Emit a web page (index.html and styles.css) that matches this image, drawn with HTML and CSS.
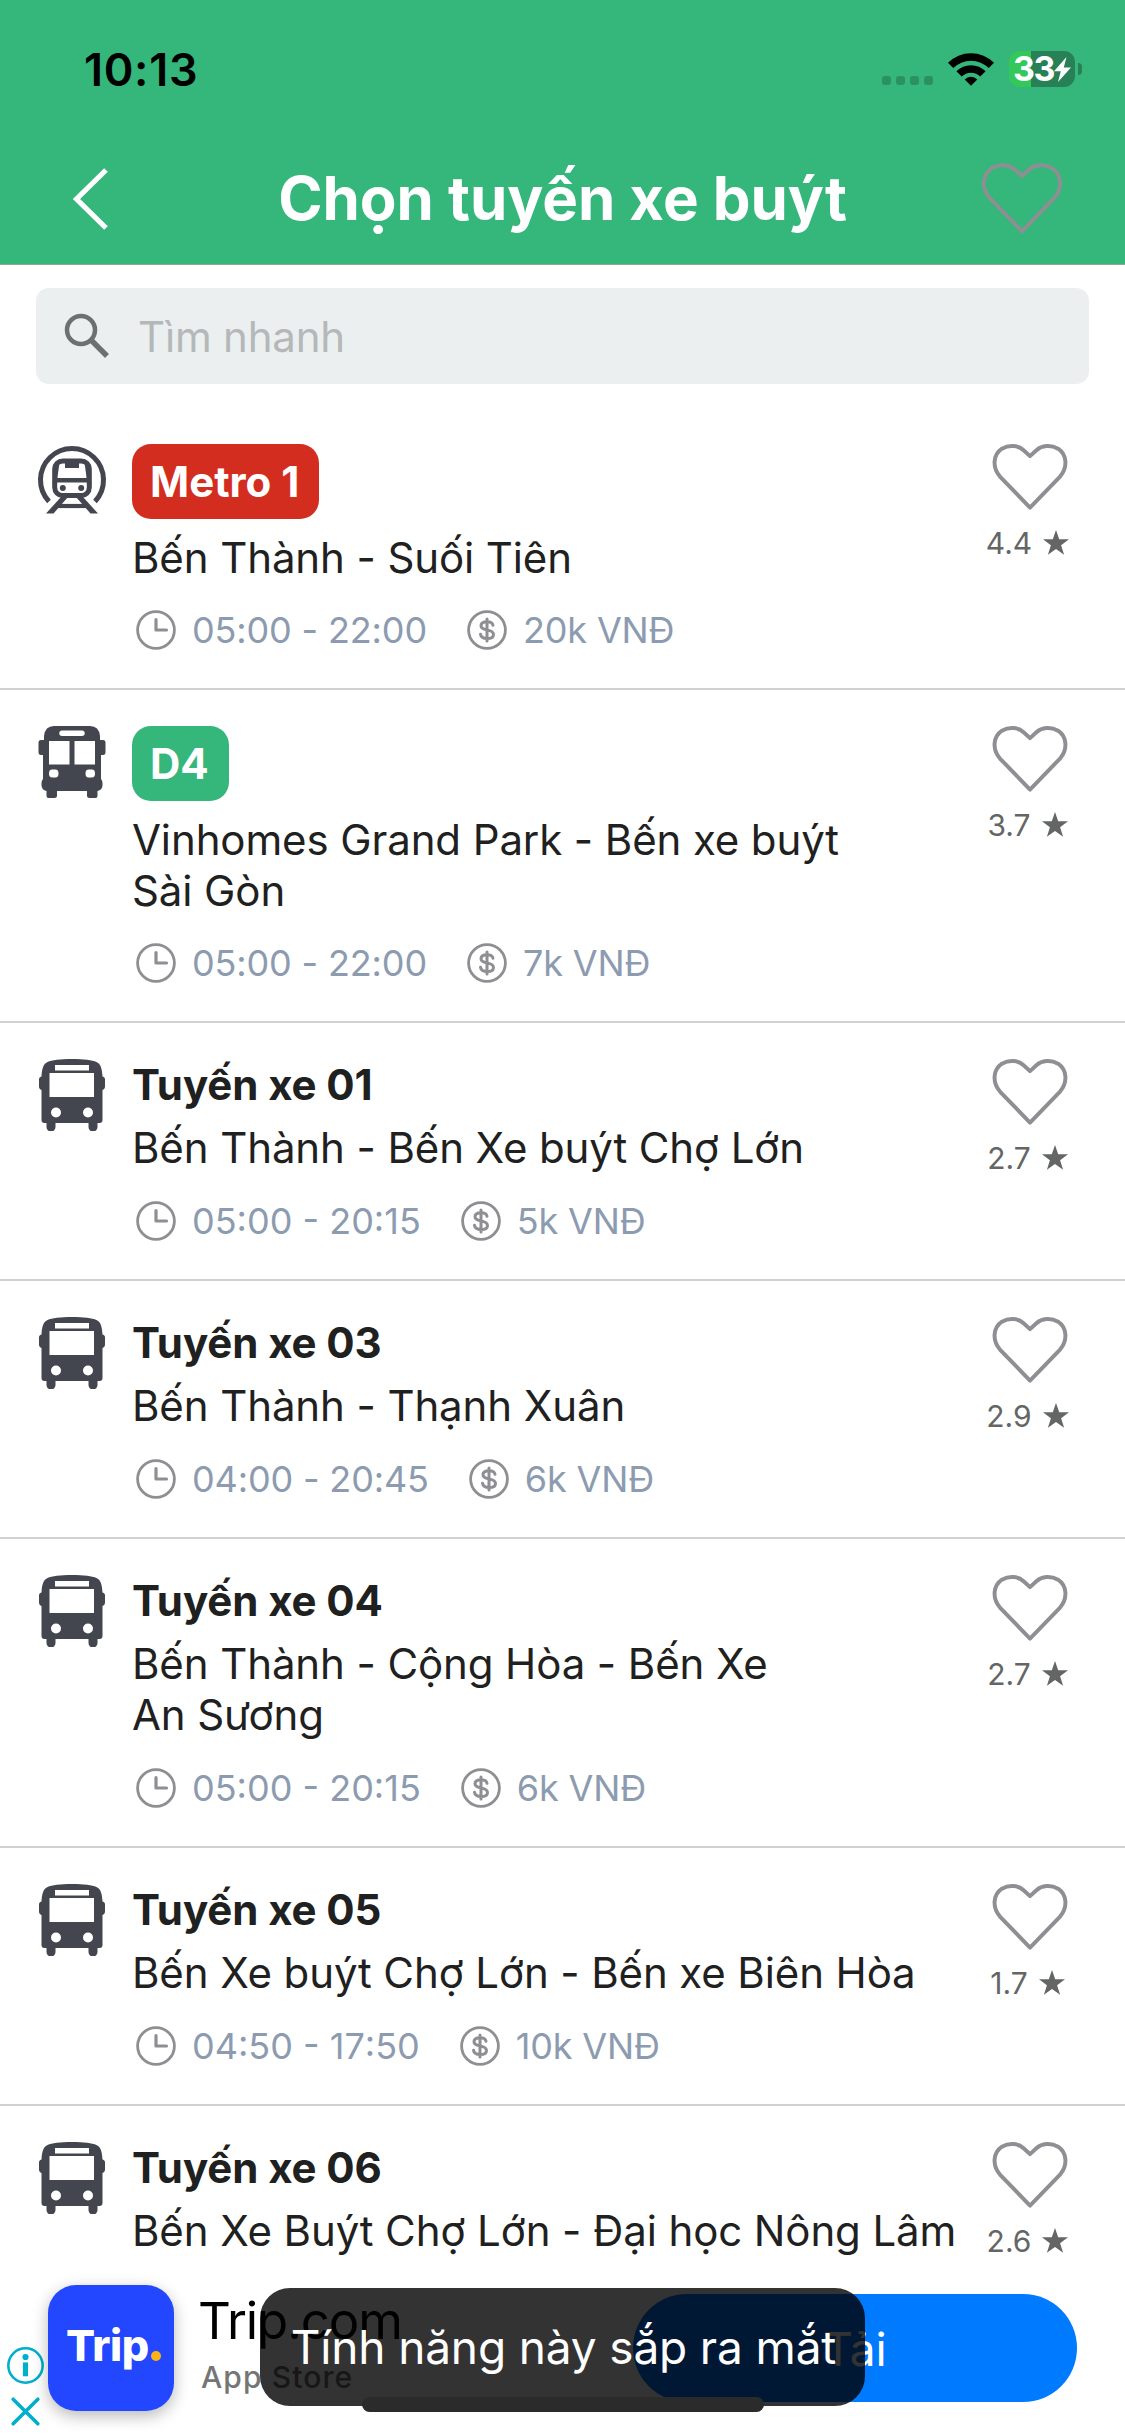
FILE: index.html
```html
<!DOCTYPE html>
<html lang="vi">
<head>
<meta charset="utf-8">
<title>Chọn tuyến xe buýt</title>
<link rel="stylesheet" href="styles.css">
</head>
<body>
<svg class="sprite" aria-hidden="true">
  <symbol id="heart" viewBox="0 0 76 67">
    <path d="M38 64.500 L7.500 33 C-1 23 1 10.500 9.500 4.800 C17 0.500 26 1.300 31.500 6.300 L38 12.300 L44.500 6.300 C50 1.300 59 0.500 66.500 4.800 C75 10.500 77 23 68.500 33 Z" fill="none" stroke="currentColor" stroke-linejoin="round"/>
  </symbol>
  <symbol id="star" viewBox="0 0 26 25">
    <path d="M13 0l3.200 9.300H26l-7.900 5.900 3 9.500L13 19l-8.100 5.700 3-9.500L0 9.300h9.800z" fill="currentColor"/>
  </symbol>
  <symbol id="clock" viewBox="0 0 40 40">
    <circle cx="20" cy="20" r="18.400" fill="none" stroke="currentColor" stroke-width="2.800"/>
    <path d="M20 9.500V20h10.500" fill="none" stroke="currentColor" stroke-width="3.200" stroke-linecap="round" stroke-linejoin="round"/>
  </symbol>
  <symbol id="dollar" viewBox="0 0 40 40">
    <circle cx="20" cy="20" r="18.400" fill="none" stroke="currentColor" stroke-width="2.800"/>
    <path d="M26 15.300C25.600 12.800 23.300 11.700 20 11.700c-3.500 0-6 1.400-6 4 0 2.800 2.800 3.500 6 4.200s6.500 1.500 6.500 4.500c0 2.600-2.700 4.100-6.400 4.100-3.600 0-6.200-1.400-6.600-4.200M20 9v22" fill="none" stroke="currentColor" stroke-width="3" stroke-linecap="round"/>
  </symbol>
  <symbol id="metro" viewBox="0 0 72 72">
    <path d="M13 57.500A31.500 31.500 0 1 1 59 57.500" fill="none" stroke="currentColor" stroke-width="5"/>
    <rect x="18.700" y="17" width="34.600" height="34.500" rx="8" fill="none" stroke="currentColor" stroke-width="5"/>
    <path d="M21.500 18.500L18.500 40M50.500 18.500L53.500 40" stroke="currentColor" stroke-width="4"/>
    <path d="M29 17h14v7H29zM19 34h34v4.500H19z" fill="currentColor"/>
    <circle cx="26.800" cy="44" r="3" fill="currentColor"/><circle cx="45.200" cy="44" r="3" fill="currentColor"/>
    <path d="M25 53h7L17.500 69.500h-7.500z" fill="currentColor"/>
    <path d="M47 53h-7l14.500 16.500h7.500z" fill="currentColor"/>
    <path d="M21 62h30" stroke="currentColor" stroke-width="4.200"/>
  </symbol>
  <symbol id="bus-wide" viewBox="0 0 72 72">
    <path fill="currentColor" fill-rule="evenodd" d="M18 0h36q9 0 10 10v4h3q2.500 0 2.500 2.500V26q0 3-2.500 3h-2v24q1.500 1.500 1.500 4v2q0 5-5 6V70q0 2-2 2h-6q-2.500 0-2.500-2v-5H21v5q0 2-2.500 2h-6q-2 0-2-2V65q-5-1-5-6v-2q0-2.500 1.500-4V29H5q-2.500 0-2.500-3v-9.500Q2.500 14 5 14h3v-4Q9 0 18 0zM26 4.500q-2.700 0-2.700 2.700t2.700 2.700h20q2.700 0 2.700-2.700T46 4.500zM13 15v23.500h20.500V15zM38.500 15v23.500H59V15zM16 43.500q-3 0-3 4t3 4h3.500q3 0 3-4t-3-4zM52.500 43.500q-3 0-3 4t3 4H56q3 0 3-4t-3-4z"/>
  </symbol>
  <symbol id="bus" viewBox="0 0 72 72">
    <path fill="currentColor" fill-rule="evenodd" d="M36 0c12 0 20 1 24.500 3C65 5 66 10 66.500 17.500c2 .5 2.500 1.500 2.500 3v7c0 2-1 3-2.500 3.500V61c0 2-1 3-3 3h-2v4a4.500 4.500 0 0 1-9 0v-4h-33v4a4.500 4.500 0 0 1-9 0v-4h-2c-2 0-3-1-3-3V31C4 30.500 3 29.500 3 27.500v-7c0-1.500.5-2.500 2.500-3C6 10 7 5 11.500 3 16 1 24 0 36 0zM19 6v5.500h34V6zM13.500 14v24H58V14zM20 48.500a5 5 0 1 0 0 10 5 5 0 0 0 0-10zM52 48.500a5 5 0 1 0 0 10 5 5 0 0 0 0-10z"/>
  </symbol>
</svg>

<div class="screen">
  <header class="header">
    <div class="status">
      <span class="time">10:13</span>
      <div class="signals">
        <div class="cell-dots"><i></i><i></i><i></i><i></i></div>
        <svg class="wifi" viewBox="0 0 46 34">
          <path d="M0 10.800a32.500 32.500 0 0 1 46 0l-5.200 5.300a25.200 25.200 0 0 0-35.600 0zM8.400 19.300a20.600 20.600 0 0 1 29.200 0l-5.300 5.300a13.200 13.200 0 0 0-18.600 0zM16.700 27.400a9 9 0 0 1 12.600 0L23 33.800z"/>
        </svg>
        <div class="battery">
          <div class="battery-body"><span>33</span><svg class="bolt" viewBox="0 0 17 25"><path d="M12.500 0L0 14.200h6.800L4 25 17 10.500H9.800z" fill="#fff"/></svg></div>
          <div class="battery-nub"></div>
        </div>
      </div>
    </div>
    <div class="navbar">
      <svg class="back" viewBox="0 0 36 62"><path d="M34 2L4.500 31l29.500 29" fill="none" stroke="#fff" stroke-width="5.200"/></svg>
      <h1>Chọn tuyến xe buýt</h1>
      <svg class="heart-nav"><use href="#heart"/></svg>
    </div>
  </header>

  <div class="search">
    <svg viewBox="0 0 46 46"><circle cx="17" cy="17" r="14" fill="none" stroke="#6b7070" stroke-width="4.500"/><path d="M27.500 27.500L43 43" stroke="#6b7070" stroke-width="5.500"/></svg>
    <span>Tìm nhanh</span>
  </div>

  <main class="routes">
    <article class="route">
      <svg class="vehicle"><use href="#metro"/></svg>
      <div class="info">
        <span class="badge red">Metro 1</span>
        <p class="name">Bến Thành - Suối Tiên</p>
        <div class="meta"><svg><use href="#clock"/></svg><span>05:00 - 22:00</span><svg class="fare"><use href="#dollar"/></svg><span>20k VNĐ</span></div>
      </div>
      <div class="rate"><svg class="heart"><use href="#heart"/></svg><div class="score">4.4<svg><use href="#star"/></svg></div></div>
    </article>
    <article class="route">
      <svg class="vehicle"><use href="#bus-wide"/></svg>
      <div class="info">
        <span class="badge green">D4</span>
        <p class="name">Vinhomes Grand Park - Bến xe buýt<br>Sài Gòn</p>
        <div class="meta"><svg><use href="#clock"/></svg><span>05:00 - 22:00</span><svg class="fare"><use href="#dollar"/></svg><span>7k VNĐ</span></div>
      </div>
      <div class="rate"><svg class="heart"><use href="#heart"/></svg><div class="score">3.7<svg><use href="#star"/></svg></div></div>
    </article>
    <article class="route">
      <svg class="vehicle"><use href="#bus"/></svg>
      <div class="info">
        <h2>Tuyến xe 01</h2>
        <p class="name">Bến Thành - Bến Xe buýt Chợ Lớn</p>
        <div class="meta"><svg><use href="#clock"/></svg><span class="loose">05:00 - 20:15</span><svg class="fare"><use href="#dollar"/></svg><span>5k VNĐ</span></div>
      </div>
      <div class="rate"><svg class="heart"><use href="#heart"/></svg><div class="score">2.7<svg><use href="#star"/></svg></div></div>
    </article>
    <article class="route">
      <svg class="vehicle"><use href="#bus"/></svg>
      <div class="info">
        <h2>Tuyến xe 03</h2>
        <p class="name">Bến Thành - Thạnh Xuân</p>
        <div class="meta"><svg><use href="#clock"/></svg><span>04:00 - 20:45</span><svg class="fare"><use href="#dollar"/></svg><span>6k VNĐ</span></div>
      </div>
      <div class="rate"><svg class="heart"><use href="#heart"/></svg><div class="score">2.9<svg><use href="#star"/></svg></div></div>
    </article>
    <article class="route">
      <svg class="vehicle"><use href="#bus"/></svg>
      <div class="info">
        <h2>Tuyến xe 04</h2>
        <p class="name">Bến Thành - Cộng Hòa - Bến Xe<br>An Sương</p>
        <div class="meta"><svg><use href="#clock"/></svg><span class="loose">05:00 - 20:15</span><svg class="fare"><use href="#dollar"/></svg><span>6k VNĐ</span></div>
      </div>
      <div class="rate"><svg class="heart"><use href="#heart"/></svg><div class="score">2.7<svg><use href="#star"/></svg></div></div>
    </article>
    <article class="route">
      <svg class="vehicle"><use href="#bus"/></svg>
      <div class="info">
        <h2>Tuyến xe 05</h2>
        <p class="name">Bến Xe buýt Chợ Lớn - Bến xe Biên Hòa</p>
        <div class="meta"><svg><use href="#clock"/></svg><span class="loose">04:50 - 17:50</span><svg class="fare"><use href="#dollar"/></svg><span>10k VNĐ</span></div>
      </div>
      <div class="rate"><svg class="heart"><use href="#heart"/></svg><div class="score">1.7<svg><use href="#star"/></svg></div></div>
    </article>
    <article class="route">
      <svg class="vehicle"><use href="#bus"/></svg>
      <div class="info">
        <h2>Tuyến xe 06</h2>
        <p class="name">Bến Xe Buýt Chợ Lớn - Đại học Nông Lâm</p>
      </div>
      <div class="rate"><svg class="heart"><use href="#heart"/></svg><div class="score">2.6<svg><use href="#star"/></svg></div></div>
    </article>
  </main>

  <footer class="ad">
    <div class="ad-marks">
      <svg viewBox="0 0 36 36"><circle cx="18" cy="18" r="16.700" fill="none" stroke="#00aecd" stroke-width="2.500"/><circle cx="18" cy="9.700" r="3" fill="#00aecd"/><path d="M15.500 15h5v13.500h-5z" fill="#00aecd"/></svg>
      <svg viewBox="0 0 36 36"><path d="M6 6l24 24M30 6L6 30" stroke="#00aecd" stroke-width="3.500" stroke-linecap="round"/></svg>
    </div>
    <div class="ad-logo">Trip<b></b></div>
    <div class="ad-text"><div class="ad-title">Trip.com</div><div class="ad-sub">App Store</div></div>
    <div class="ad-cta">Tải</div>
  </footer>

  <div class="toast">Tính năng này sắp ra mắt</div>
  <div class="home-bar"></div>
</div>
</body>
</html>
```
FILE: styles.css
```css
* { box-sizing: border-box; }

body {
  margin: 0;
  background: #fff;
  color: #1f2121;
  font-family: Inter, "Noto Sans", sans-serif;
}

h1, h2, p { margin: 0; }
svg { display: block; flex: none; }
.sprite { position: absolute; width: 0; height: 0; }

.screen {
  position: relative;
  width: 1125px;
  height: 2436px;
  overflow: hidden;
  display: flex;
  flex-direction: column;
}

/* header */
.header {
  height: 265px;
  flex: none;
  background: #35b67a;
  border-bottom: 1px solid #8fa89b;
}

.status {
  height: 138px;
  padding: 0 43px 0 84px;
  display: flex;
  align-items: center;
  justify-content: space-between;
}

.time { font-size: 45px; font-weight: 600; letter-spacing: .700px; color: #000; }
.signals { display: flex; align-items: center; }
.cell-dots { display: flex; gap: 5px; margin: 23px 15px 0 0; }
.cell-dots i { width: 9px; height: 9px; border-radius: 3px; background: #2b9161; }
.wifi { width: 46px; height: 34px; margin-right: 15px; }
.battery { display: flex; align-items: center; gap: 3px; }

.battery-body {
  width: 66px;
  height: 36px;
  padding-left: 4px;
  border-radius: 11px;
  background: linear-gradient(90deg, #34c759 22px, #288057 22px);
  color: #fff;
  font-size: 34px;
  font-weight: 700;
  letter-spacing: -1.5px;
  line-height: 36px;
  display: flex;
  align-items: center;
}

.bolt { width: 17px; height: 25px; }
.battery-nub { width: 4px; height: 12px; border-radius: 0 4px 4px 0; background: #288057; }

.navbar {
  height: 126px;
  padding: 0 62px 0 72px;
  display: flex;
  align-items: center;
  justify-content: space-between;
}

.back { width: 36px; height: 62px; margin-right: 38px; margin-bottom: 5px; }
.navbar h1 { font-size: 60px; font-weight: 700; letter-spacing: -.050px; line-height: 72px; color: #fff; margin: -6px 1px 0 -1px; }
.heart-nav { width: 82px; height: 71px; margin-bottom: 5px; color: #8e8e93; stroke-width: 3.700; }

/* search */
.search {
  height: 96px;
  flex: none;
  margin: 23px 36px 24px;
  padding: 0 28px;
  border-radius: 13px;
  background: #ebeff0;
  display: flex;
  align-items: center;
  gap: 28px;
  font-size: 42px;
  letter-spacing: -.200px;
  color: #b4b8b9;
}
.search svg { width: 46px; height: 46px; margin-bottom: 1px; }

/* routes */
.routes { height: 1866px; flex: none; overflow: hidden; }

.route {
  padding: 36px 51px 38px 36px;
  border-bottom: 2px solid #d1d1d3;
  display: flex;
}

.vehicle { width: 72px; height: 72px; margin-right: 24px; color: #43464f; }
.info { flex: 1; min-width: 0; display: flex; flex-direction: column; align-items: flex-start; }

.badge {
  height: 75px;
  padding: 12px 20px 12px 18px;
  border-radius: 19px;
  color: #fff;
  font-size: 42px;
  font-weight: 700;
  line-height: 51px;
}
.red { background: #d32d20; }
.green { background: #35b67a; }

.route h2 { font-size: 42px; font-weight: 700; letter-spacing: -.100px; line-height: 51px; }
.name { margin-top: 13px; font-size: 42px; letter-spacing: -.110px; line-height: 51px; white-space: nowrap; }
h2 + .name { margin-top: 12px; padding-bottom: 1px; }

.meta {
  margin: 27px 0 0 4px;
  height: 40px;
  display: flex;
  align-items: center;
  gap: 16px;
  font-size: 36px;
  font-kerning: none;
  letter-spacing: -.150px;
  color: #8c9bb0;
}
.meta svg { width: 40px; height: 40px; color: #8e8e93; }
.meta .fare { margin-left: 24px; }
.meta .loose { letter-spacing: 0; }

.rate { width: 93px; flex: none; display: flex; flex-direction: column; align-items: center; }
.heart { width: 76px; height: 66px; margin: 0 0 1px 5px; color: #8e8e93; stroke-width: 4; }
.score {
  margin-top: 14px;
  display: flex;
  align-items: center;
  gap: 11px;
  font-size: 30px;
  line-height: 36px;
  color: #646666;
}
.score svg { width: 26px; height: 25px; margin-bottom: 1px; }

/* ad banner */
.ad {
  height: 162px;
  flex: none;
  padding: 0 48px 0 7px;
  background: #fff;
  display: flex;
  align-items: flex-start;
}
.ad-marks { width: 41px; padding-top: 73px; display: flex; flex-direction: column; gap: 9px; }
.ad-marks svg { width: 37px; height: 37px; }

.ad-logo {
  width: 126px;
  height: 126px;
  padding: 0 0 3px 18px;
  margin-top: 11px;
  border-radius: 28px;
  background: #2346ff;
  box-shadow: 0 5px 16px rgba(0, 0, 0, .28);
  color: #fff;
  font-size: 43px;
  font-weight: 800;
  letter-spacing: -.400px;
  line-height: 121px;
  display: flex;
  align-items: baseline;
  gap: 2px;
}
.ad-logo b { width: 10px; height: 10px; border-radius: 50%; background: #fcb316; }

.ad-text { margin: 16px 0 0 24px; flex: 1; }
.ad-title { font-size: 51px; letter-spacing: -1.100px; line-height: 62px; color: #000; }
.ad-sub { margin-top: 6px; padding-left: 3px; font-size: 30px; font-weight: 500; letter-spacing: 1.100px; line-height: 38px; color: #757575; }

.ad-cta {
  width: 444px;
  height: 108px;
  margin-top: 20px;
  border-radius: 54px;
  background: #007aff;
  color: #fff;
  font-size: 46px;
  line-height: 110px;
  text-align: center;
}

/* overlays */
.toast {
  position: absolute;
  left: 260px;
  top: 2288px;
  width: 605px;
  height: 118px;
  padding-left: 2px;
  border-radius: 30px;
  background: rgba(0, 0, 0, .8);
  color: #fff;
  font-size: 46px;
  letter-spacing: -.150px;
  line-height: 118px;
  text-align: center;
}

.home-bar {
  position: absolute;
  left: 362px;
  top: 2397px;
  width: 402px;
  height: 15px;
  border-radius: 8px;
  background: #2b2b2b;
}
```
